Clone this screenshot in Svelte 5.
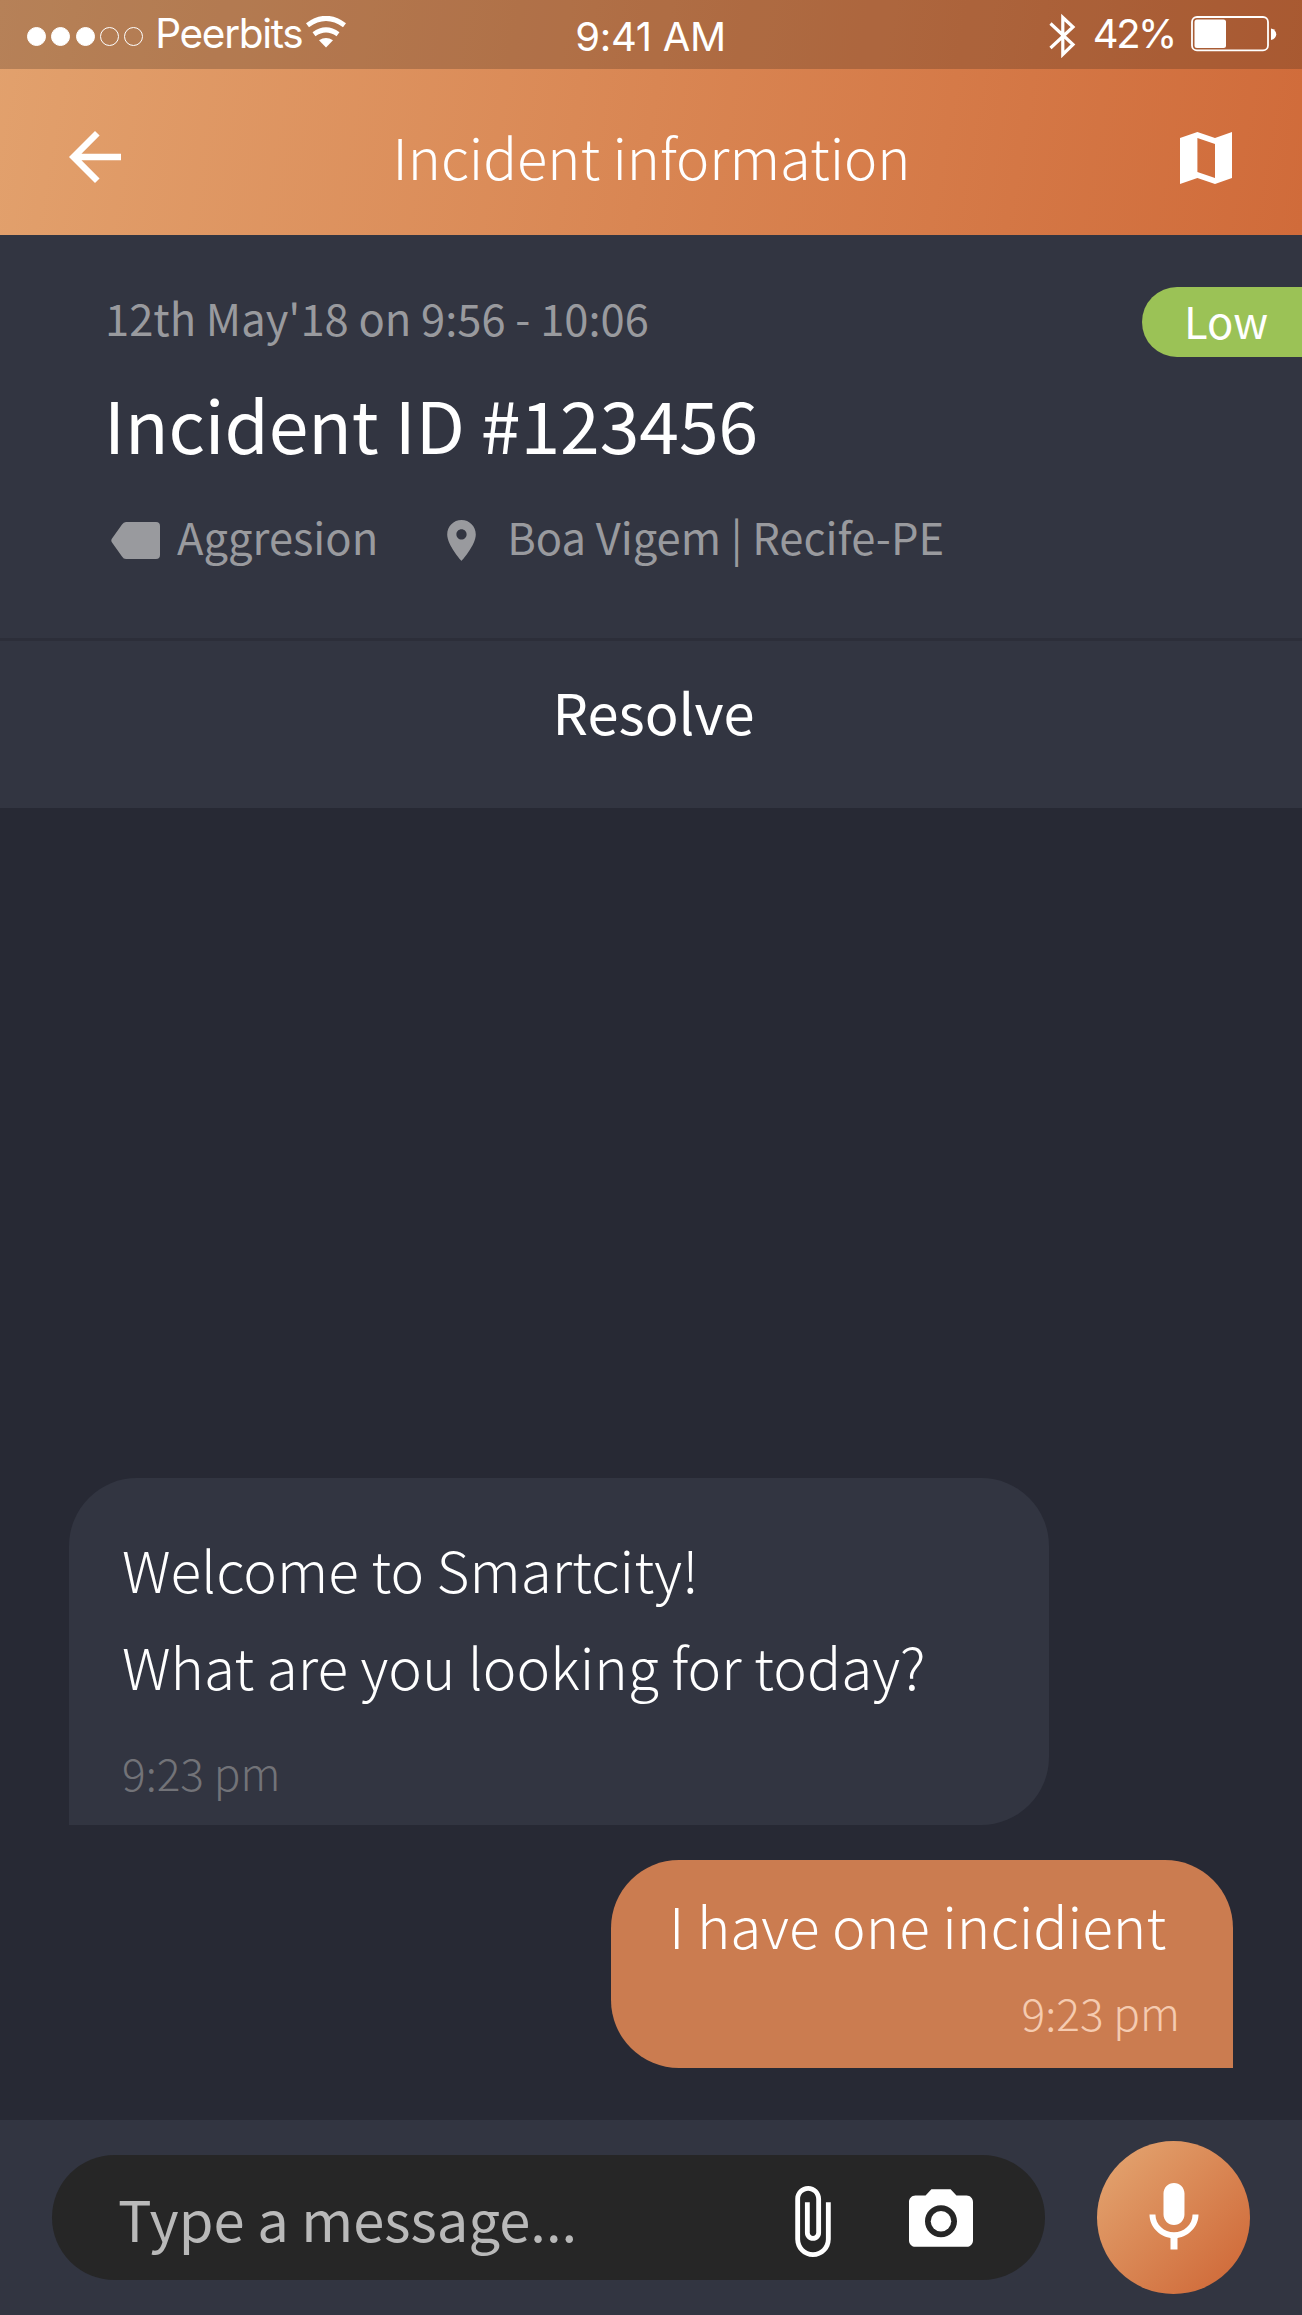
<script lang="ts">
	interface Message {
		from: 'bot' | 'me';
		lines: string[];
		time: string;
	}

	const signal = [true, true, true, false, false];

	const incident = {
		date: "12th May'18 on 9:56 - 10:06",
		title: 'Incident ID #123456',
		category: 'Aggresion',
		place: 'Boa Vigem | Recife-PE',
		priority: 'Low'
	};

	const messages: Message[] = [
		{
			from: 'bot',
			lines: ['Welcome to Smartcity!', 'What are you looking for today?'],
			time: '9:23 pm'
		},
		{ from: 'me', lines: ['I have one incidient'], time: '9:23 pm' }
	];
</script>

<div class="screen">
	<header class="top">
		<div class="status">
			<div class="carrier">
				<div class="dots">
					{#each signal as on}
						<span class="dot" class:on></span>
					{/each}
				</div>
				<span class="carrier-name">Peerbits</span>
				<svg class="wifi" viewBox="0 0 42 32">
					<path d="M2.5 9.2Q21 -4.5 39.5 9.2" fill="none" stroke="#fff" stroke-width="5" />
					<path d="M9 18.2Q21 9.6 33 18.2" fill="none" stroke="#fff" stroke-width="5" />
					<path d="M14 24.2Q21 19.6 28 24.2L21 31.5Z" fill="#fff" />
				</svg>
			</div>
			<span class="clock">9:41 AM</span>
			<div class="power">
				<svg class="bluetooth" viewBox="0 0 27 46">
					<path
						d="M1.5 10.5L24 31.5L13.8 41.5V4.5L24 14L1.5 35"
						fill="none"
						stroke="#fff"
						stroke-width="3.2"
					/>
				</svg>
				<span class="percent">42%</span>
				<svg class="battery" viewBox="0 0 86 36">
					<rect x="1" y="1" width="76" height="33.4" rx="5" fill="none" stroke="#fff" stroke-width="1.8" />
					<rect x="3.5" y="3.6" width="31.5" height="28.4" rx="2.5" fill="#fff" />
					<path d="M80 12.5c7 1.5 7 10 0 11.5z" fill="#fff" />
				</svg>
			</div>
		</div>

		<div class="nav">
			<button class="icon-btn" aria-label="Back">
				<svg class="back" viewBox="0 0 24 24">
					<path d="M20 11H7.83l5.59-5.59L12 4l-8 8 8 8 1.41-1.41L7.83 13H20v-2z" fill="#fff" />
				</svg>
			</button>
			<h1>Incident information</h1>
			<button class="icon-btn end" aria-label="Map">
				<svg class="map" viewBox="0 0 52 52">
					<path
						d="M0 6L17.4 0L35 6L52 0V46L35 52L17.4 46L0 52ZM17.4 6V40L35 46V12Z"
						fill="#fff"
						fill-rule="evenodd"
					/>
				</svg>
			</button>
		</div>
	</header>

	<section class="summary">
		<div class="summary-head">
			<span class="date">{incident.date}</span>
			<span class="badge">{incident.priority}</span>
		</div>
		<h2>{incident.title}</h2>
		<div class="meta">
			<svg class="tag" viewBox="0 0 49 37">
				<path
					d="M15 0H45Q49 0 49 4V33Q49 37 45 37H15Q12.5 37 11 34.5L1 20.5Q-.4 18.5 1 16.5L11 2.5Q12.5 0 15 0Z"
					fill="#999a9e"
				/>
			</svg>
			<span class="category">{incident.category}</span>
			<svg class="pin" viewBox="0 0 24 24">
				<path
					d="M12 2C8.13 2 5 5.13 5 9c0 5.25 7 13 7 13s7-7.75 7-13c0-3.87-3.13-7-7-7zm0 9.5c-1.38 0-2.5-1.12-2.5-2.5s1.12-2.5 2.5-2.5 2.5 1.12 2.5 2.5-1.12 2.5-2.5 2.5z"
					fill="#999a9e"
				/>
			</svg>
			<span class="place">{incident.place}</span>
		</div>
	</section>

	<button class="resolve">Resolve</button>

	<main class="chat">
		{#each messages as message}
			<div class="bubble {message.from}">
				{#each message.lines as line}
					<p>{line}</p>
				{/each}
				<time>{message.time}</time>
			</div>
		{/each}
	</main>

	<footer class="composer">
		<div class="field">
			<span class="placeholder">Type a message...</span>
			<svg class="clip" viewBox="7 1 11 22">
				<path
					d="M16.5 6v11.5c0 2.21-1.79 4-4 4s-4-1.79-4-4V5c0-1.38 1.12-2.5 2.5-2.5s2.5 1.12 2.5 2.5v10.5c0 .55-.45 1-1 1s-1-.45-1-1V6H10v9.5c0 1.38 1.12 2.5 2.5 2.5s2.5-1.12 2.5-2.5V5c0-2.21-1.79-4-4-4S7 2.79 7 5v12.5c0 3.04 2.46 5.5 5.5 5.5s5.5-2.46 5.5-5.5V6h-1.5z"
					fill="#fff"
				/>
			</svg>
			<svg class="camera" viewBox="2 2 20 18">
				<circle cx="12" cy="12" r="3.2" fill="#fff" />
				<path
					d="M9 2L7.17 4H4c-1.1 0-2 .9-2 2v12c0 1.1.9 2 2 2h16c1.1 0 2-.9 2-2V6c0-1.1-.9-2-2-2h-3.17L15 2H9zm3 15c-2.76 0-5-2.24-5-5s2.24-5 5-5 5 2.24 5 5-2.24 5-5 5z"
					fill="#fff"
				/>
			</svg>
		</div>
		<button class="mic" aria-label="Record">
			<svg viewBox="0 0 24 24">
				<path
					d="M12 14c1.66 0 2.99-1.34 2.99-3L15 5c0-1.66-1.34-3-3-3S9 3.34 9 5v6c0 1.66 1.34 3 3 3zm5.3-3c0 3-2.54 5.1-5.3 5.1S6.7 14 6.7 11H5c0 3.41 2.72 6.23 6 6.72V21h2v-3.28c3.28-.48 6-3.3 6-6.72h-1.7z"
					fill="#fff"
				/>
			</svg>
		</button>
	</footer>
</div>

<style>
	:global(body) {
		background: #272934;
	}

	.screen {
		display: flex;
		flex-direction: column;
		height: 2315px;
		overflow: hidden;
		background: #272934;
		color: #fff;
		font-family: 'Noto Sans CJK SC', 'Noto Sans', sans-serif;
	}

	svg {
		display: block;
		flex: none;
	}

	button {
		padding: 0;
		border: 0;
		background: none;
		color: inherit;
		font: inherit;
	}

	h1,
	h2,
	p {
		margin: 0;
		font-weight: 400;
	}

	.top {
		height: 235px;
		background: linear-gradient(100deg, #e2a16d 0%, #d98653 50%, #d06b3a 100%);
	}

	.status {
		display: grid;
		grid-template-columns: 1fr auto 1fr;
		box-sizing: border-box;
		height: 68.5px;
		padding: 0 25px 0 27px;
		background: rgba(40, 30, 20, 0.24);
		font-family: Inter, sans-serif;
		font-size: 40px;
		line-height: 67px;
	}

	.carrier,
	.power {
		display: flex;
		align-items: flex-start;
	}

	.power {
		justify-content: flex-end;
	}

	.dots {
		display: flex;
		gap: 5.3px;
		padding-top: 27px;
	}

	.dot {
		box-sizing: border-box;
		width: 19px;
		height: 19px;
		border: 1.5px solid #fff;
		border-radius: 50%;
	}

	.dot.on {
		background: #fff;
	}

	.carrier-name {
		margin-left: 12px;
		font-size: 40.5px;
		letter-spacing: -1.3px;
	}

	.wifi {
		width: 42px;
		height: 32px;
		margin: 16px 0 0 3px;
	}

	.clock {
		padding-right: 3px;
		line-height: 73px;
		letter-spacing: -0.3px;
	}

	.bluetooth {
		width: 27px;
		height: 46px;
		margin: 13px 17px 0 0;
	}

	.percent {
		letter-spacing: -2.4px;
	}

	.battery {
		width: 86px;
		height: 36px;
		margin: 16px 0 0 16px;
	}

	.nav {
		display: grid;
		grid-template-columns: 1fr auto 1fr;
		align-items: center;
		height: 166px;
		padding: 0 70px 0 56px;
	}

	.icon-btn.end {
		justify-self: end;
	}

	.back {
		width: 78px;
		height: 78px;
		margin-top: 10px;
	}

	.map {
		width: 52px;
		height: 52px;
		margin-top: 11px;
	}

	h1 {
		padding: 7px 0 0 15px;
		font-size: 56px;
		font-weight: 300;
		line-height: 160px;
	}

	.summary {
		box-sizing: border-box;
		height: 403px;
		padding: 52px 0 0 105px;
		background: #323541;
	}

	.summary-head {
		display: flex;
		justify-content: space-between;
		height: 70px;
	}

	.date {
		color: #999a9e;
		font-size: 43.5px;
		line-height: 62px;
	}

	.badge {
		box-sizing: border-box;
		width: 160px;
		height: 70px;
		padding-left: 42px;
		border-radius: 35px 0 0 35px;
		background: #9bc256;
		font-size: 43.5px;
		line-height: 68px;
	}

	h2 {
		margin: 16px 0 32px -1px;
		font-size: 71.4px;
		line-height: 100px;
	}

	.meta {
		display: flex;
		align-items: center;
		height: 60px;
		color: #999a9e;
		font-size: 43.5px;
		line-height: 60px;
	}

	.category,
	.place {
		padding-top: 3px;
	}

	.tag {
		width: 49px;
		height: 37px;
		margin: 10px 17px 0 6px;
	}

	.pin {
		width: 49px;
		height: 49px;
		margin: 10px 21px 0 59px;
	}

	.resolve {
		height: 170px;
		border-top: 3px solid #2c2e39;
		background: #323541;
		font-size: 56px;
		line-height: 139px;
		padding: 0 0 28px 5px;
	}

	.chat {
		display: flex;
		flex: 1;
		flex-direction: column;
		justify-content: flex-end;
		gap: 35px;
		padding: 0 69px 52px;
	}

	.bubble {
		display: flex;
		flex-direction: column;
		box-sizing: border-box;
		font-size: 56.7px;
		line-height: 97px;
	}

	.bubble p {
		font-weight: 300;
		white-space: nowrap;
	}

	.bubble time {
		font-size: 44.2px;
		font-weight: 300;
		line-height: 60px;
	}

	.bot {
		align-self: flex-start;
		width: 980px;
		height: 347px;
		padding: 42px 0 0 53px;
		border-radius: 68px 68px 68px 0;
		background: #323541;
	}

	.bot time {
		margin-top: 28px;
		color: #727378;
	}

	.me {
		align-self: flex-end;
		width: 622px;
		height: 208px;
		padding: 16px 53px 0 58px;
		border-radius: 68px 68px 0 68px;
		background: #cb7c50;
	}

	.me time {
		align-self: flex-end;
		margin-top: 9px;
		color: #f5cbb0;
	}

	.composer {
		display: flex;
		align-items: center;
		justify-content: space-between;
		box-sizing: border-box;
		height: 195px;
		padding: 0 52px;
		background: #323541;
	}

	.field {
		display: flex;
		align-items: center;
		box-sizing: border-box;
		width: 993px;
		height: 125px;
		padding: 0 72px 0 66px;
		border-radius: 63px;
		background: #262626;
	}

	.placeholder {
		flex: 1;
		color: #b9b9b9;
		font-size: 56.1px;
		line-height: 125px;
	}

	.clip {
		width: 36px;
		height: 71px;
		margin: 8px 78px 0 0;
	}

	.camera {
		width: 64px;
		height: 58px;
	}

	.mic {
		display: flex;
		align-items: center;
		justify-content: center;
		width: 153px;
		height: 153px;
		border-radius: 50%;
		background: linear-gradient(135deg, #e2a16d 10%, #d06b3a 90%);
	}

	.mic svg {
		width: 84px;
		height: 84px;
	}
</style>
